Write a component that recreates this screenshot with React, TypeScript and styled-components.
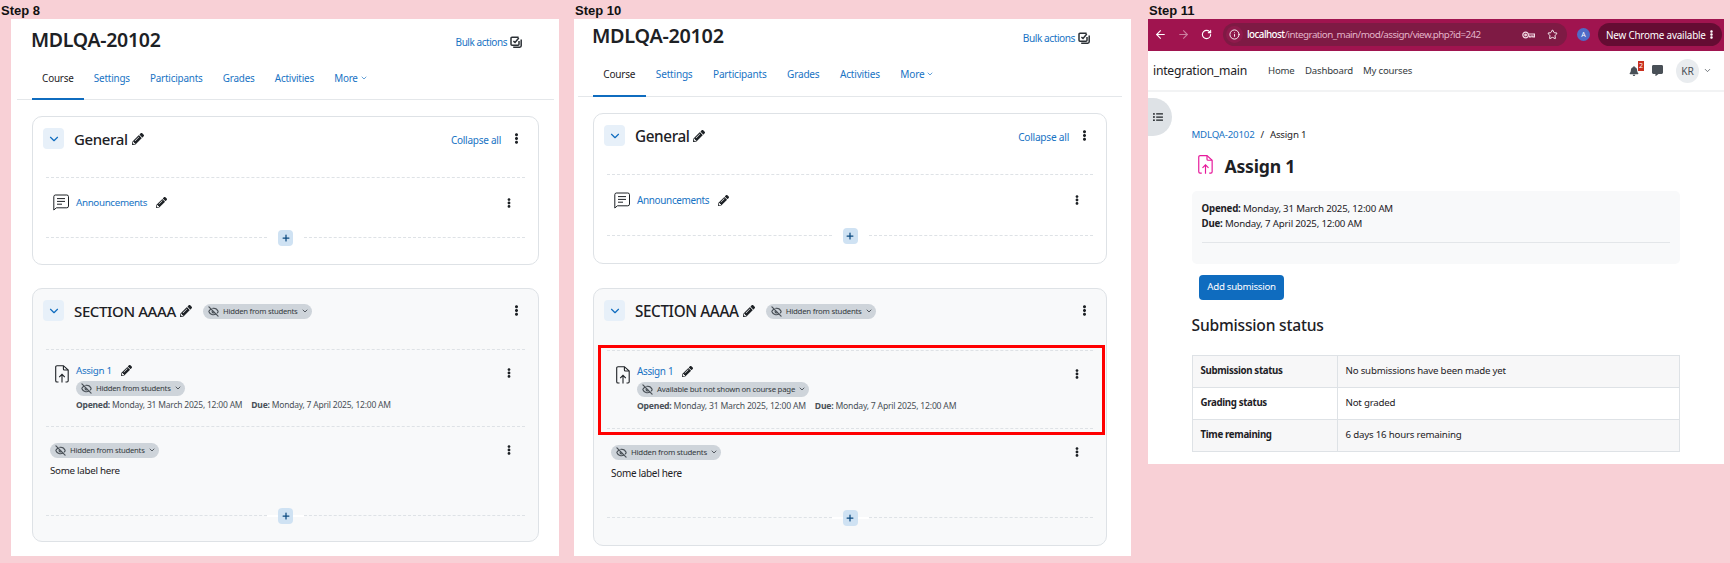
import React from 'react';
import styled, { createGlobalStyle } from 'styled-components';
import { ArrowLeft, ArrowRight, ChevronDown, EyeOff, Info, Plus, RotateCw, Star } from 'lucide-react';
import { FaBell, FaCommentAlt, FaEllipsisV, FaListUl, FaPencilAlt } from 'react-icons/fa';

const LINK = '#1873c4';
const INK = '#1d2125';

const GlobalStyle = createGlobalStyle`
  html, body {
    margin: 0;
    height: 563px;
    overflow: hidden;
    background: #f8d0d6;
  }
  * {
    box-sizing: border-box;
  }
`;

const Page = styled.div`
  display: flex;
  width: 1730px;
  height: 563px;
  font-family: 'Noto Sans', sans-serif;
  color: ${INK};
`;

const Column = styled.section<{ $width: number }>`
  width: ${(p) => p.$width}px;
`;

const StepLabel = styled.h2`
  height: 19px;
  margin: 0 0 0 1px;
  font-family: 'Liberation Sans', sans-serif;
  font-size: 13px;
  line-height: 22px;
  font-weight: 700;
  color: #111;
`;

const ShotOffset = styled.div`
  margin-left: 11px;
`;

const Shot = styled.div<{ $width: number; $height: number; $size: number }>`
  width: ${(p) => p.$width}px;
  height: ${(p) => p.$height}px;
  overflow: hidden;
  background: #fff;
  font-size: ${(p) => p.$size}px;
  letter-spacing: -0.01em;
`;

const TitleRow = styled.header<{ $height: number; $left: number; $right: number }>`
  display: flex;
  align-items: center;
  justify-content: space-between;
  height: ${(p) => p.$height}px;
  padding: 0 ${(p) => p.$right}px 0 ${(p) => p.$left}px;
`;

const CourseTitle = styled.h1`
  margin: -1px 0 0 -1px;
  font-size: 1.95em;
  font-weight: 600;
  letter-spacing: -0.015em;
`;

const BulkLink = styled.a`
  display: flex;
  align-items: center;
  gap: 3px;
  margin-top: 4px;
  color: ${LINK};
  letter-spacing: -0.045em;
`;

const Tabs = styled.nav<{ $height: number; $left: number; $right: number; $lift: number }>`
  display: flex;
  height: ${(p) => p.$height}px;
  margin: 0 ${(p) => p.$right}px 0 ${(p) => p.$left}px;
  padding-left: 15px;
  border-bottom: 1px solid #e4e7ea;
  & > a {
    padding-bottom: ${(p) => p.$lift}px;
  }
`;

const Tab = styled.a<{ $active?: boolean }>`
  display: flex;
  align-items: center;
  gap: 2px;
  height: calc(100% + 1px);
  padding: 0 1.02em;
  color: ${(p) => (p.$active ? INK : LINK)};
  font-size: 0.99em;
  letter-spacing: -0.02em;
  border-bottom: 2px solid ${(p) => (p.$active ? '#0f6cbf' : 'transparent')};
`;

const CardStack = styled.div<{ $left: number; $width: number; $gap: number; $top: number }>`
  display: flex;
  flex-direction: column;
  gap: ${(p) => p.$gap}px;
  width: ${(p) => p.$width}px;
  margin: ${(p) => p.$top}px 0 0 ${(p) => p.$left}px;
`;

const Card = styled.div<{ $height: number; $shaded?: boolean }>`
  height: ${(p) => p.$height}px;
  border: 1px solid #dee2e6;
  border-radius: 10px;
  background: ${(p) => (p.$shaded ? '#f8f9fa' : '#fff')};
`;

const CardHeader = styled.div<{ $height: number }>`
  display: flex;
  align-items: flex-start;
  height: ${(p) => p.$height - 1}px;
  padding: 11px 16px 0 10px;
`;

const Toggle = styled.span`
  display: flex;
  align-items: center;
  justify-content: center;
  width: 21px;
  height: 21px;
  border-radius: 4px;
  background: #e7f0f9;
  color: #0f6cbf;
`;

const SectionName = styled.h3`
  display: flex;
  align-items: center;
  gap: 4px;
  height: 21px;
  margin: 0 0 0 10px;
  font-size: 1.5em;
  font-weight: 500;
  white-space: nowrap;
  letter-spacing: -0.025em;
`;

const HeaderEnd = styled.div`
  display: flex;
  align-items: center;
  height: 21px;
  margin-left: auto;
`;

const CollapseLink = styled.a`
  margin: 2px 10px 0 0;
  color: ${LINK};
  letter-spacing: -0.025em;
`;

const Badge = styled.span<{ $left?: number; $top?: number }>`
  display: inline-flex;
  align-items: center;
  gap: 4px;
  height: 14.5px;
  margin: ${(p) => p.$top ?? 0}px 0 0 ${(p) => p.$left ?? 0}px;
  padding: 0 3px 0 5px;
  border-radius: 8px;
  background: #ced4da;
  color: #343a40;
  font-size: 0.77em;
  font-weight: 400;
  letter-spacing: -0.03em;
  white-space: nowrap;
  svg:last-child {
    margin-left: -1px;
  }
`;

const ActivityRow = styled.div<{ $height: number; $gutter: number; $pad?: number; $center?: boolean }>`
  position: relative;
  display: flex;
  align-items: ${(p) => (p.$center ? 'center' : 'flex-start')};
  height: ${(p) => p.$height}px;
  margin: 0 13px;
  padding: ${(p) => (p.$center ? 0 : p.$pad)}px 11px ${(p) => (p.$center ? 3 : 0)}px ${(p) => p.$gutter}px;
  border-top: 1px dashed #dee2e6;
`;

const IconCell = styled.span<{ $width: number }>`
  display: flex;
  width: ${(p) => p.$width}px;
  flex: none;
`;

const ActivityBody = styled.div<{ $raise?: number }>`
  display: flex;
  flex-direction: column;
  align-items: flex-start;
  flex: 1;
  margin-top: ${(p) => -(p.$raise ?? 0)}px;
`;

const ActivityName = styled.div`
  display: flex;
  align-items: center;
  gap: 9px;
  height: 14px;
  font-size: 0.98em;
  letter-spacing: -0.035em;
  a {
    color: ${LINK};
  }
`;

const DatesLine = styled.div`
  display: flex;
  gap: 9px;
  margin-top: 3px;
  font-size: 0.85em;
  line-height: 12px;
  letter-spacing: -0.025em;
  color: #495057;
  white-space: nowrap;
`;

const LabelBody = styled.div`
  flex: 1;
`;

const LabelText = styled.p`
  margin: 5px 0 0;
  font-size: 0.98em;
  line-height: 14px;
  letter-spacing: -0.03em;
`;

const RowMenu = styled.span<{ $top?: number }>`
  display: flex;
  margin-top: ${(p) => p.$top ?? 0}px;
`;

const AddLine = styled.div`
  display: flex;
  align-items: center;
  height: 15px;
  margin: 0 13px;
`;

const AddDash = styled.span`
  flex: 1;
  border-top: 1px dashed #dee2e6;
`;

const AddGap = styled.span`
  display: flex;
  justify-content: center;
  width: 37px;
  background: linear-gradient(#fff, #fff) center / 100% 2px no-repeat;
`;

const AddButton = styled.span`
  display: flex;
  align-items: center;
  justify-content: center;
  width: 15px;
  height: 16px;
  border-radius: 4px;
  background: #cfe2f3;
  color: #0c4a80;
`;

const Highlight = styled.div`
  position: absolute;
  top: -6px;
  left: -9px;
  right: -12px;
  bottom: -7px;
  border: 3px solid #f00;
  pointer-events: none;
`;

const Browser = styled.div`
  width: 576px;
  height: 445px;
  overflow: hidden;
  position: relative;
  background: #fff;
  font-size: 9.7px;
  letter-spacing: -0.02em;
`;

const ChromeBar = styled.div`
  display: flex;
  align-items: center;
  height: 32px;
  padding: 0 2px 1px 1px;
  background: #a0144f;
  color: #fff;
`;

const ChromeButton = styled.span<{ $dim?: boolean }>`
  display: flex;
  align-items: center;
  justify-content: center;
  width: 23px;
  opacity: ${(p) => (p.$dim ? 0.45 : 1)};
`;

const UrlPill = styled.div`
  display: flex;
  align-items: center;
  width: 344px;
  height: 23px;
  margin-left: 5px;
  padding: 0 9px 0 3px;
  border-radius: 12px;
  background: #7e1a44;
`;

const SiteBadge = styled.span`
  display: flex;
  align-items: center;
  justify-content: center;
  width: 17px;
  height: 17px;
  border-radius: 50%;
  background: #8f1a4c;
`;

const UrlText = styled.span`
  flex: 1;
  margin-left: 4px;
  font-size: 9.8px;
  color: #e3b4c8;
  letter-spacing: -0.055em;
  white-space: nowrap;
  b {
    font-weight: 500;
    color: #fff;
  }
`;

const UrlActions = styled.span`
  display: flex;
  align-items: center;
  gap: 12px;
`;

const ProfileDot = styled.span`
  display: flex;
  align-items: center;
  justify-content: center;
  width: 13px;
  height: 13px;
  margin-left: 10px;
  border-radius: 50%;
  background: #4f6bc6;
  font-size: 7px;
`;

const UpdatePill = styled.div`
  display: flex;
  align-items: center;
  justify-content: space-between;
  width: 124px;
  height: 23px;
  margin-left: 8px;
  padding: 0 6px 0 8px;
  border-radius: 12px;
  background: #650c33;
  font-size: 9.9px;
  letter-spacing: -0.02em;
  white-space: nowrap;
`;

const SiteHeader = styled.div`
  display: flex;
  align-items: center;
  height: 41px;
  padding: 0 12px 0 5px;
  border-bottom: 2px solid #f2f3f4;
`;

const SiteName = styled.span`
  width: 115px;
  font-size: 12.2px;
  letter-spacing: -0.02em;
`;

const SiteMenu = styled.a<{ $width: number }>`
  width: ${(p) => p.$width}px;
  color: #343a40;
  font-size: 9.6px;
`;

const HeaderTools = styled.div`
  display: flex;
  align-items: center;
  margin-left: auto;
  color: #495057;
`;

const BellWrap = styled.span`
  position: relative;
  display: flex;
  margin-right: 13px;
`;

const CountBadge = styled.span`
  position: absolute;
  top: -5px;
  left: 9px;
  width: 6px;
  height: 10px;
  background: #ca3120;
  color: #fff;
  font-size: 7px;
  line-height: 10px;
  text-align: center;
`;

const Avatar = styled.span`
  display: flex;
  align-items: center;
  justify-content: center;
  width: 23px;
  height: 24px;
  margin: 0 4px 0 13px;
  border-radius: 50%;
  background: #e9ecef;
  font-size: 10.2px;
`;

const DrawerToggle = styled.span`
  position: absolute;
  top: 79px;
  left: 0;
  display: flex;
  align-items: center;
  width: 24px;
  height: 38px;
  padding-left: 5px;
  border-radius: 0 19px 19px 0;
  background: #dee2e6;
  color: #1d2125;
`;

const Main = styled.main`
  padding: 36px 44px 0 43.5px;
`;

const Breadcrumb = styled.div`
  display: flex;
  gap: 6px;
  height: 14px;
  line-height: 14px;
  a {
    color: ${LINK};
  }
`;

const PageTitle = styled.h1`
  display: flex;
  align-items: center;
  gap: 12px;
  height: 21px;
  margin: 12px 0 0 6px;
  font-size: 17.6px;
  font-weight: 700;
  span {
    margin-top: 2px;
  }
`;

const InfoBox = styled.div`
  height: 73px;
  margin-top: 16px;
  padding: 10px 10px 0;
  border-radius: 5px;
  background: #f8f9fa;
  line-height: 15px;
  hr {
    margin: 11px 0 0;
    border: 0;
    border-top: 1px solid #e3e6e9;
  }
`;

const SubmitButton = styled.button`
  display: block;
  width: 85px;
  height: 25px;
  margin: 11px 0 0 7.5px;
  padding: 0 0 2px;
  border: 0;
  border-radius: 4px;
  background: #0f6cbf;
  color: #fff;
  font: inherit;
  letter-spacing: -0.03em;
`;

const Heading = styled.h2`
  margin: 15px 0 1px;
  font-size: 15.6px;
  font-weight: 500;
  line-height: 20px;
`;

const StatusTable = styled.table`
  width: 100%;
  margin-top: 20px;
  border-collapse: collapse;
  table-layout: fixed;
  th, td {
    height: 32px;
    padding: 0 8px 3px;
    border: 1px solid #dee2e6;
    text-align: left;
  }
  th {
    width: 145px;
    font-weight: 700;
    letter-spacing: -0.035em;
  }
  tr:nth-child(odd) {
    background: #f7f7f8;
  }
`;

const AssignIcon: React.FC<{ color?: string; width?: number; height?: number }> = ({
  color = INK,
  width = 14,
  height = 18,
}) => (
  <svg width={width} height={height} viewBox="0 0 14 18" fill="none" stroke={color} strokeWidth="1.1">
    <path d="M3.5 17H2a1.3 1.3 0 0 1-1.3-1.3V2A1.3 1.3 0 0 1 2 .7h6.4L13.2 5v10.7A1.3 1.3 0 0 1 12 17h-1.5" />
    <path d="M8.4.9V4a1 1 0 0 0 1 1h3.6" />
    <path d="M7 17.6V9.6M4.2 12.2 7 9.4l2.8 2.8" />
  </svg>
);

const ForumIcon = () => (
  <svg width="16" height="17" viewBox="0 0 16 17" fill="none" stroke={INK} strokeWidth="1">
    <path d="M2.2 1h11.6A1.7 1.7 0 0 1 15.5 2.7v9.4a1.7 1.7 0 0 1-1.7 1.7H3.4L.8 16V2.7A1.7 1.7 0 0 1 2.2 1Z" />
    <path d="M4 4.6h8M4 7.4h8M4 10.2h5" />
  </svg>
);

const BulkIcon = () => (
  <svg width="12" height="12" viewBox="0 0 12 12" fill="none" stroke="#2b3035" strokeWidth="1.5">
    <path d="M8.6 1.2H2a1 1 0 0 0-1 1v6a1 1 0 0 0 1 1h6a1 1 0 0 0 1-1V5" />
    <path d="M3.4 5.2 5 6.4 8.8 2M11.2 3.4v6.4a1.4 1.4 0 0 1-1.4 1.4H3.2" />
  </svg>
);

const KeyIcon = () => (
  <svg width="13" height="8" viewBox="0 0 13 8" fill="none" stroke="#f3dbe5" strokeWidth="1.2">
    <circle cx="3.6" cy="4" r="2.8" />
    <circle cx="3.6" cy="4" r="0.8" />
    <path d="M6.4 3h6v3h-1.6v-1H9v1H7.4V5H6.4" />
  </svg>
);

const HiddenBadge: React.FC<{ text?: string; left?: number; top?: number }> = ({
  text = 'Hidden from students',
  left,
  top,
}) => (
  <Badge $left={left} $top={top}>
    <EyeOff size={11} strokeWidth={2.6} color="#495057" />
    {text}
    <ChevronDown size={8} strokeWidth={2.4} />
  </Badge>
);

const Pencil: React.FC<{ size?: number }> = ({ size = 11 }) => <FaPencilAlt size={size} color="#1d2125" />;
const Kebab = () => <FaEllipsisV size={10} color="#1d2125" />;

const AddRow = () => (
  <AddLine>
    <AddDash />
    <AddGap>
      <AddButton>
        <Plus size={10} strokeWidth={3} />
      </AddButton>
    </AddGap>
    <AddDash />
  </AddLine>
);

interface ShotLayout {
  width: number;
  size: number;
  titleHeight: number;
  tabsHeight: number;
  tabsLift: number;
  left: number;
  navLeft: number;
  navRight: number;
  bulkRight: number;
  cardWidth: number;
  cardGap: number;
  generalHeight: number;
  generalRow: number;
  sectionHeight: number;
  sectionHead: number;
  assignRow: number;
  labelRow: number;
  assignBadge: string;
  highlight?: boolean;
}

const step8: ShotLayout = {
  width: 548,
  size: 10,
  titleHeight: 42,
  tabsHeight: 39,
  tabsLift: 3,
  left: 21,
  navLeft: 6,
  navRight: 5,
  bulkRight: 37,
  cardWidth: 507,
  cardGap: 23,
  generalHeight: 149,
  generalRow: 53,
  sectionHeight: 254,
  sectionHead: 61,
  assignRow: 77,
  labelRow: 82,
  assignBadge: 'Hidden from students',
};

const step10: ShotLayout = {
  width: 557,
  size: 10.17,
  titleHeight: 34,
  tabsHeight: 44,
  tabsLift: 0,
  left: 19,
  navLeft: 4,
  navRight: 9,
  bulkRight: 41,
  cardWidth: 514,
  cardGap: 24,
  generalHeight: 151,
  generalRow: 54,
  sectionHeight: 258,
  sectionHead: 62,
  assignRow: 78,
  labelRow: 82,
  assignBadge: 'Available but not shown on course page',
  highlight: true,
};

const CourseShot: React.FC<{ layout: ShotLayout }> = ({ layout: l }) => (
  <Shot $width={l.width} $height={537} $size={l.size}>
    <TitleRow $height={l.titleHeight} $left={l.left} $right={l.bulkRight}>
      <CourseTitle>MDLQA-20102</CourseTitle>
      <BulkLink>
        Bulk actions <BulkIcon />
      </BulkLink>
    </TitleRow>
    <Tabs $height={l.tabsHeight} $left={l.navLeft} $right={l.navRight} $lift={l.tabsLift}>
      <Tab $active>Course</Tab>
      <Tab>Settings</Tab>
      <Tab>Participants</Tab>
      <Tab>Grades</Tab>
      <Tab>Activities</Tab>
      <Tab>
        More <ChevronDown size={8} strokeWidth={2} />
      </Tab>
    </Tabs>
    <CardStack $left={l.left} $width={l.cardWidth} $gap={l.cardGap} $top={16}>
      <Card $height={l.generalHeight}>
        <CardHeader $height={61}>
          <Toggle>
            <ChevronDown size={14} strokeWidth={2} />
          </Toggle>
          <SectionName>
            General <Pencil size={12} />
          </SectionName>
          <HeaderEnd>
            <CollapseLink>Collapse all</CollapseLink>
            <FaEllipsisV size={11} color="#1d2125" />
          </HeaderEnd>
        </CardHeader>
        <ActivityRow $height={l.generalRow} $gutter={7} $center>
          <IconCell $width={23}>
            <ForumIcon />
          </IconCell>
          <ActivityBody>
            <ActivityName>
              <a>Announcements</a>
              <Pencil />
            </ActivityName>
          </ActivityBody>
          <Kebab />
        </ActivityRow>
        <AddRow />
      </Card>
      <Card $height={l.sectionHeight} $shaded>
        <CardHeader $height={l.sectionHead}>
          <Toggle>
            <ChevronDown size={14} strokeWidth={2} />
          </Toggle>
          <SectionName>
            SECTION AAAA <Pencil size={12} />
          </SectionName>
          <HiddenBadge left={11} top={4} />
          <HeaderEnd>
            <FaEllipsisV size={11} color="#1d2125" />
          </HeaderEnd>
        </CardHeader>
        <ActivityRow $height={l.assignRow} $gutter={9} $pad={15}>
          <IconCell $width={21}>
            <AssignIcon />
          </IconCell>
          <ActivityBody $raise={2}>
            <ActivityName>
              <a>Assign 1</a>
              <Pencil />
            </ActivityName>
            <HiddenBadge text={l.assignBadge} top={4} />
            <DatesLine>
              <span>
                <strong>Opened:</strong> Monday, 31 March 2025, 12:00 AM
              </span>
              <span>
                <strong>Due:</strong> Monday, 7 April 2025, 12:00 AM
              </span>
            </DatesLine>
          </ActivityBody>
          <RowMenu $top={3}>
            <Kebab />
          </RowMenu>
          {l.highlight && <Highlight />}
        </ActivityRow>
        <ActivityRow $height={l.labelRow} $gutter={4} $pad={16}>
          <LabelBody>
            <HiddenBadge />
            <LabelText>Some label here</LabelText>
          </LabelBody>
          <RowMenu $top={2}>
            <Kebab />
          </RowMenu>
        </ActivityRow>
        <AddRow />
      </Card>
    </CardStack>
  </Shot>
);

const AssignmentShot = () => (
  <Browser>
    <ChromeBar>
      <ChromeButton>
        <ArrowLeft size={13} />
      </ChromeButton>
      <ChromeButton $dim>
        <ArrowRight size={13} />
      </ChromeButton>
      <ChromeButton>
        <RotateCw size={11} strokeWidth={2.4} />
      </ChromeButton>
      <UrlPill>
        <SiteBadge>
          <Info size={11} />
        </SiteBadge>
        <UrlText>
          <b>localhost</b>/integration_main/mod/assign/view.php?id=242
        </UrlText>
        <UrlActions>
          <KeyIcon />
          <Star size={11} />
        </UrlActions>
      </UrlPill>
      <ProfileDot>A</ProfileDot>
      <UpdatePill>
        New Chrome available
        <FaEllipsisV size={9} />
      </UpdatePill>
    </ChromeBar>
    <SiteHeader>
      <SiteName>integration_main</SiteName>
      <SiteMenu $width={37}>Home</SiteMenu>
      <SiteMenu $width={58}>Dashboard</SiteMenu>
      <SiteMenu $width={60}>My courses</SiteMenu>
      <HeaderTools>
        <BellWrap>
          <FaBell size={10} />
          <CountBadge>2</CountBadge>
        </BellWrap>
        <FaCommentAlt size={11} />
        <Avatar>KR</Avatar>
        <ChevronDown size={9} strokeWidth={2} />
      </HeaderTools>
    </SiteHeader>
    <DrawerToggle>
      <FaListUl size={10} />
    </DrawerToggle>
    <Main>
      <Breadcrumb>
        <a>MDLQA-20102</a>
        <span>/</span>
        <span>Assign 1</span>
      </Breadcrumb>
      <PageTitle>
        <AssignIcon color="#e6199b" width={15} height={21} />
        <span>Assign 1</span>
      </PageTitle>
      <InfoBox>
        <div>
          <strong>Opened:</strong> Monday, 31 March 2025, 12:00 AM
        </div>
        <div>
          <strong>Due:</strong> Monday, 7 April 2025, 12:00 AM
        </div>
        <hr />
      </InfoBox>
      <SubmitButton>Add submission</SubmitButton>
      <Heading>Submission status</Heading>
      <StatusTable>
        <tbody>
          <tr>
            <th>Submission status</th>
            <td>No submissions have been made yet</td>
          </tr>
          <tr>
            <th>Grading status</th>
            <td>Not graded</td>
          </tr>
          <tr>
            <th>Time remaining</th>
            <td>6 days 16 hours remaining</td>
          </tr>
        </tbody>
      </StatusTable>
    </Main>
  </Browser>
);

export default function App() {
  return (
    <Page>
      <GlobalStyle />
      <Column $width={574}>
        <StepLabel>Step 8</StepLabel>
        <ShotOffset>
          <CourseShot layout={step8} />
        </ShotOffset>
      </Column>
      <Column $width={574}>
        <StepLabel>Step 10</StepLabel>
        <CourseShot layout={step10} />
      </Column>
      <Column $width={582}>
        <StepLabel>Step 11</StepLabel>
        <AssignmentShot />
      </Column>
    </Page>
  );
}
